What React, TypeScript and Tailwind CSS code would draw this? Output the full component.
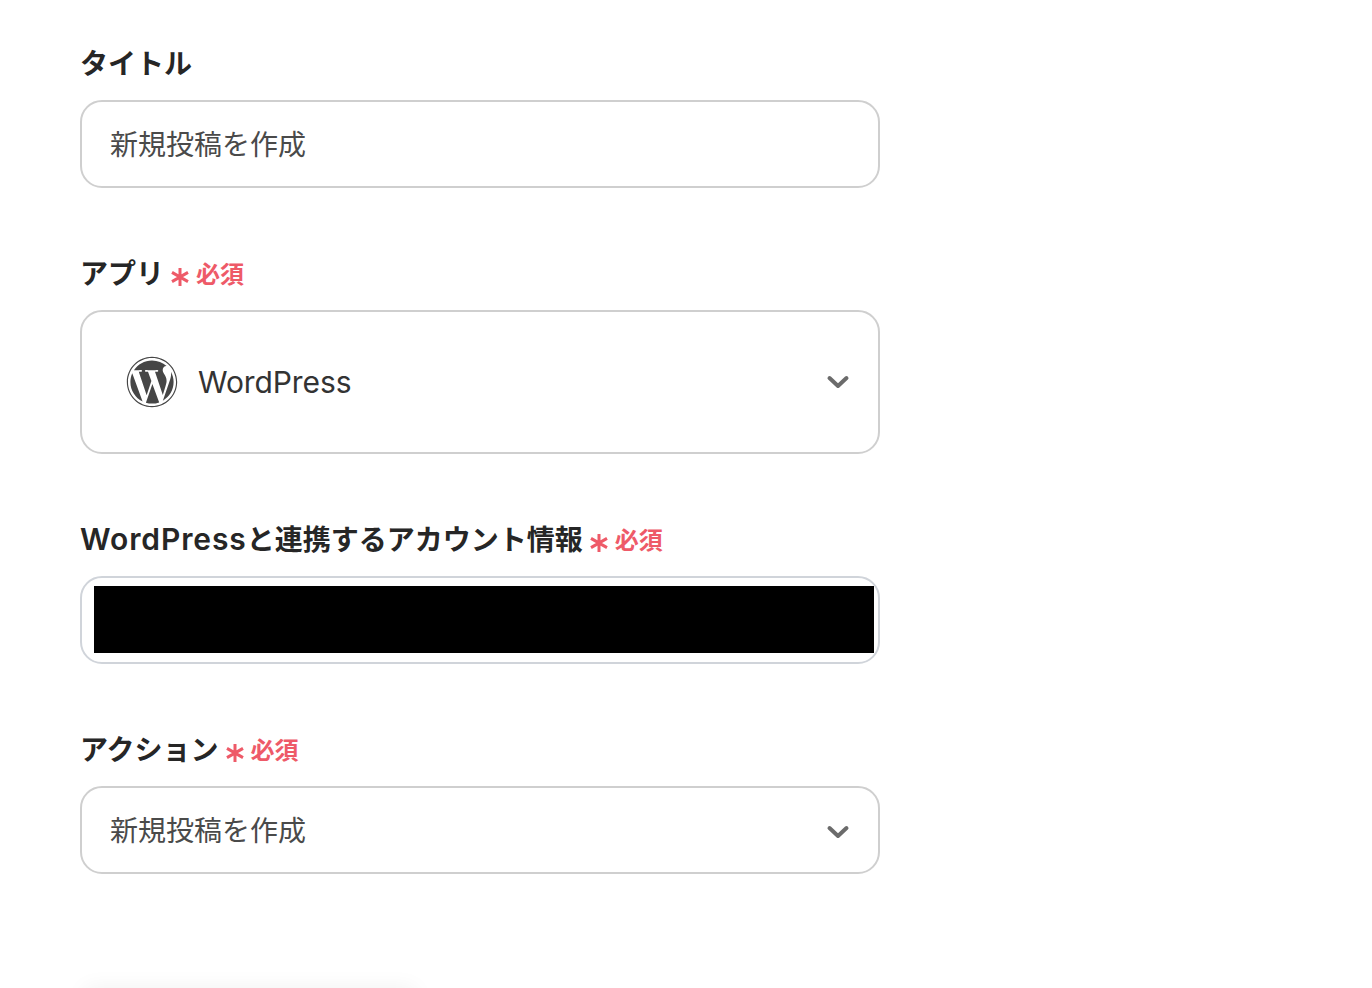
import { ReactNode } from "react";
import { FaWordpress } from "react-icons/fa";

const fontStack = "font-['Inter','Noto_Sans_CJK_JP',sans-serif]";

function Required() {
  return (
    <span className="ml-[6px] flex items-center pt-[4px] text-[#ee5a68]">
      <svg viewBox="0 0 20 20" className="mt-[3px] mr-[6px] h-5 w-5" fill="none" stroke="currentColor" strokeWidth="3">
        <path d="M10 1v18M2 5.4l16 9.2M18 5.4L2 14.6" />
      </svg>
      <span className="text-[24px] font-bold">必須</span>
    </span>
  );
}

function Field({ label, required, children }: { label: ReactNode; required?: boolean; children: ReactNode }) {
  return (
    <div className="mb-[65px] w-[800px] last:mb-0">
      <div className="mb-[17px] flex h-10 items-center text-[28px] font-bold text-[#262626]">
        <span className="pt-[2px]">{label}</span>
        {required && <Required />}
      </div>
      {children}
    </div>
  );
}

function Chevron() {
  return (
    <svg viewBox="0 0 24 14" className="h-[14px] w-6 text-[#6b6b6b]" fill="none" stroke="currentColor" strokeWidth="4" strokeLinecap="round" strokeLinejoin="round">
      <path d="M3.5 3l8.5 8 8.5-8" />
    </svg>
  );
}

export default function App() {
  return (
    <div className={`h-[988px] overflow-hidden bg-white pt-[43px] pl-20 ${fontStack}`}>
      <Field label="タイトル">
        <div className="flex h-[88px] items-center rounded-[22px] border-2 border-[#cfcfcf] pl-7 text-[28px] text-[#4a4a4a]">
          <span className="pt-[2px]">新規投稿を作成</span>
        </div>
      </Field>

      <Field label="アプリ" required>
        <div className="flex h-[144px] items-center justify-between rounded-[22px] border-2 border-[#cfcfcf] pr-[28px] pl-[44px]">
          <div className="flex items-center gap-[20px]">
            <FaWordpress className="h-[52px] w-[52px] text-[#464646]" />
            <span className="text-[30px] tracking-[-0.1px] text-[#333333]">WordPress</span>
          </div>
          <Chevron />
        </div>
      </Field>

      <Field
        label={
          <span className="inline-block -translate-y-px">
            <span className="text-[30px] font-semibold tracking-[0.9px]">WordPress</span>と連携するアカウント情報
          </span>
        }
        required
      >
        <div className="h-[88px] rounded-[22px] border-2 border-[#d0d4da] pt-2 pr-1 pb-[9px] pl-3">
          <div className="h-full bg-black" />
        </div>
      </Field>

      <Field label="アクション" required>
        <div className="flex h-[88px] items-center justify-between rounded-[22px] border-2 border-[#cfcfcf] pr-[28px] pl-7 text-[28px] text-[#4a4a4a]">
          <span className="pt-[2px]">新規投稿を作成</span>
          <span className="pt-[4px]">
            <Chevron />
          </span>
        </div>
      </Field>

      <div className="mt-[114px] h-10 w-[330px] translate-x-[5px] bg-[#f8f9f9] shadow-[0_0_22px_rgba(0,0,0,0.06)]" />
    </div>
  );
}
